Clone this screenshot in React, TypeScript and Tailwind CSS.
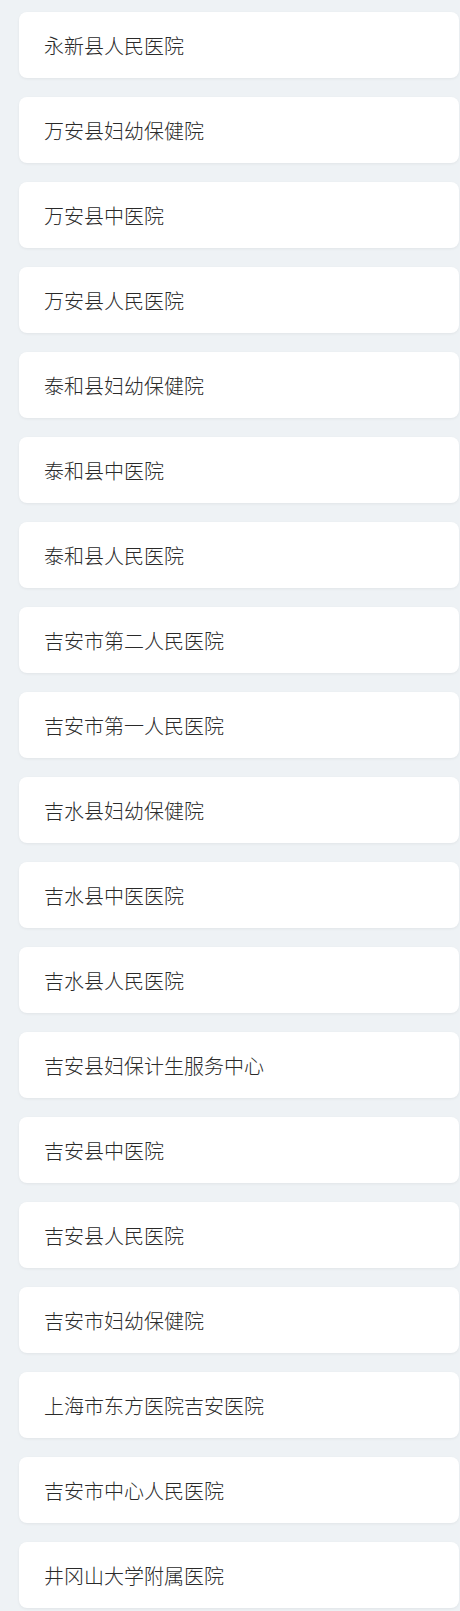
import React from "react";

const names = [
  "永新县人民医院",
  "万安县妇幼保健院",
  "万安县中医院",
  "万安县人民医院",
  "泰和县妇幼保健院",
  "泰和县中医院",
  "泰和县人民医院",
  "吉安市第二人民医院",
  "吉安市第一人民医院",
  "吉水县妇幼保健院",
  "吉水县中医医院",
  "吉水县人民医院",
  "吉安县妇保计生服务中心",
  "吉安县中医院",
  "吉安县人民医院",
  "吉安市妇幼保健院",
  "上海市东方医院吉安医院",
  "吉安市中心人民医院",
  "井冈山大学附属医院",
];

export default function App() {
  return (
    <div
      className="min-h-[1611px] w-[460px] bg-[#eef2f5] pt-[12px] pl-[19px] pr-[1px] pb-[3px] flex flex-col gap-[19px]"
      style={{ fontFamily: '"Noto Sans CJK SC", "Noto Sans", sans-serif' }}
    >
      {names.map((n) => (
        <div
          key={n}
          className="h-[66px] w-[440px] rounded-[8px] bg-white shadow-[0_1px_3px_rgba(0,0,0,0.06)] flex items-center pl-[25px] pt-[1px] text-[20px] font-light text-[#2a2a2a]"
        >
          {n}
        </div>
      ))}
    </div>
  );
}
